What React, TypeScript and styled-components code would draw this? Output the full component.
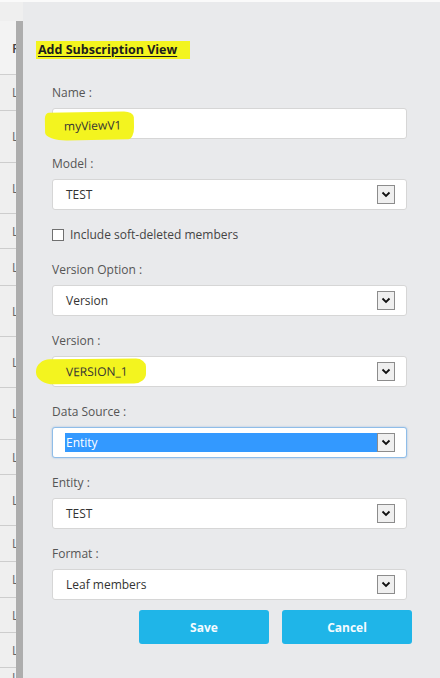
import styled, { createGlobalStyle } from 'styled-components';

type Option = { label: string; value: string; mark?: boolean; selected?: boolean; focused?: boolean };

const rowHeights = [36, 52, 51, 35, 37, 51, 51, 52, 35, 51, 36, 36, 35, 35, 20];

const selects: Option[] = [
    { label: 'Version Option', value: 'Version' },
    { label: 'Version', value: 'VERSION_1', mark: true },
    { label: 'Data Source', value: 'Entity', selected: true, focused: true },
    { label: 'Entity', value: 'TEST' },
    { label: 'Format', value: 'Leaf members' },
];

const Chevron = () => (
    <svg width="10" height="7" viewBox="0 0 10 7">
        <path d="M1.5 1.5 L5 5 L8.5 1.5" fill="none" stroke="#111" strokeWidth="1.8" />
    </svg>
);

const App = () => {
    return (
        <Screen>
            <GlobalStyle />
            <TopLine />
            <Body>
                <Strip>
                    <StripTop />
                    <StripMain>
                        <Table>
                            <HeaderCell>Format</HeaderCell>
                            {rowHeights.map((h, i) => (
                                <Cell key={i} $h={h}>Leaf members</Cell>
                            ))}
                        </Table>
                        <Splitter />
                    </StripMain>
                </Strip>
                <Panel>
                    <Title>
                        <TitleMark>Add Subscription View</TitleMark>
                    </Title>
                    <Form>
                        <Field>
                            <Label>Name :</Label>
                            <TextBox>
                                <NameMark>myViewV1</NameMark>
                            </TextBox>
                        </Field>
                        <Field>
                            <Label>Model :</Label>
                            <SelectBox>
                                <Value>TEST</Value>
                                <ArrowBox><Chevron /></ArrowBox>
                            </SelectBox>
                        </Field>
                        <CheckRow>
                            <CheckBox />
                            <span>Include soft-deleted members</span>
                        </CheckRow>
                        {selects.map((s) => (
                            <Field key={s.label}>
                                <Label>{s.label} :</Label>
                                <SelectBox $focused={s.focused}>
                                    <Value $selected={s.selected}>
                                        {s.mark ? <VersionMark>{s.value}</VersionMark> : s.value}
                                    </Value>
                                    <ArrowBox><Chevron /></ArrowBox>
                                </SelectBox>
                            </Field>
                        ))}
                        <Actions>
                            <Button>Save</Button>
                            <Button>Cancel</Button>
                        </Actions>
                    </Form>
                </Panel>
            </Body>
        </Screen>
    )
}

const GlobalStyle = createGlobalStyle`
    html, body {
        margin: 0;
        padding: 0;
    }
    body {
        background: #e9eaec;
        font-family: "Segoe UI", "Open Sans", "Noto Sans", sans-serif;
    }
`

const Screen = styled.div`
    width: 440px;
    height: 678px;
    display: flex;
    flex-direction: column;
    overflow: hidden;
    background: #e9eaec;
`

const TopLine = styled.div`
    height: 2px;
    background: #fafafa;
    flex-shrink: 0;
`

const Body = styled.div`
    flex: 1;
    display: flex;
    min-height: 0;
`

const Strip = styled.div`
    width: 23px;
    flex-shrink: 0;
    display: flex;
    flex-direction: column;
`

const StripTop = styled.div`
    height: 19px;
    background: #efefef;
`

const StripMain = styled.div`
    flex: 1;
    display: flex;
    min-height: 0;
`

const Table = styled.div`
    width: 16px;
    overflow: hidden;
    display: flex;
    flex-direction: column;
    background: #efefef;
`

const HeaderCell = styled.div`
    height: 54px;
    flex-shrink: 0;
    box-sizing: border-box;
    padding-left: 12px;
    display: flex;
    align-items: center;
    white-space: nowrap;
    font-size: 13px;
    font-weight: 600;
    color: #444;
    background: #f3f3f3;
    border-bottom: 1px solid #cfcfcf;
`

const Cell = styled.div<{ $h: number }>`
    height: ${p => p.$h}px;
    flex-shrink: 0;
    box-sizing: border-box;
    padding-left: 12px;
    display: flex;
    align-items: center;
    white-space: nowrap;
    font-size: 12px;
    color: #666;
    border-bottom: 1px solid #cdcdcd;
`

const Splitter = styled.div`
    width: 7px;
    background: #adadad;
`

const Panel = styled.div`
    flex: 1;
    padding: 39px 33px 0 15px;
`

const Title = styled.h2`
    margin: 0;
    font-size: 12.5px;
    line-height: 16px;
    font-weight: 700;
    color: #1c1c1c;
`

const TitleMark = styled.span`
    display: inline-block;
    margin-left: -2px;
    padding: 1px 13px 1px 2px;
    background: #f3f41f;
    text-decoration: underline;
    text-underline-offset: 2px;
`

const Form = styled.div`
    margin: 24px 0 0 14px;
    display: flex;
    flex-direction: column;
`

const Field = styled.div`
    display: flex;
    flex-direction: column;
    & + & {
        margin-top: 15px;
    }
`

const Label = styled.label`
    padding-top: 2px;
    font-size: 12px;
    line-height: 16px;
    color: #555;
    margin-bottom: 7px;
`

const TextBox = styled.div`
    height: 31px;
    box-sizing: border-box;
    display: flex;
    align-items: center;
    padding-left: 11px;
    background: #fff;
    border: 1px solid #d6d6d6;
    border-radius: 3px;
    font-size: 12px;
    color: #333;
`

const NameMark = styled.span`
    display: inline-block;
    margin: 5px 0 0 -19px;
    padding: 4px 13px 5px 19px;
    background: #f3f41f;
    border-radius: 4px 10px 6px 22px / 6px 6px 12px 8px;
    transform: rotate(-1deg);
    line-height: 19px;
`

const SelectBox = styled.div<{ $focused?: boolean }>`
    height: 31px;
    box-sizing: border-box;
    display: flex;
    align-items: center;
    padding: 0 11px 0 12px;
    background: #fff;
    border: 1px solid ${p => (p.$focused ? '#8fbde8' : '#d6d6d6')};
    box-shadow: ${p => (p.$focused ? '0 0 2px rgba(80, 150, 220, 0.5)' : 'none')};
    border-radius: 3px;
    font-size: 12px;
    color: #333;
`

const Value = styled.div<{ $selected?: boolean }>`
    flex: 1;
    height: 19px;
    line-height: 19px;
    padding-left: 1px;
    white-space: nowrap;
    background: ${p => (p.$selected ? '#3399ff' : 'transparent')};
    color: ${p => (p.$selected ? '#fff' : '#333')};
`

const VersionMark = styled.span`
    display: inline-block;
    margin: -5px 0 0 -30px;
    padding: 3px 18px 3px 30px;
    background: #f3f41f;
    border-radius: 14px 10px 12px 18px / 12px 8px 10px 12px;
    transform: rotate(-0.5deg);
    line-height: 19px;
`

const ArrowBox = styled.div`
    width: 18px;
    height: 19px;
    box-sizing: border-box;
    flex-shrink: 0;
    display: flex;
    align-items: center;
    justify-content: center;
    background: #efefef;
    border: 1px solid #8c8c8c;
`

const CheckRow = styled.div`
    margin: 17px 0 17px;
    display: flex;
    align-items: center;
    gap: 6px;
    font-size: 12px;
    line-height: 16px;
    color: #444;
`

const CheckBox = styled.span`
    width: 12px;
    height: 12px;
    box-sizing: border-box;
    border: 1px solid #707070;
    background: #fff;
`

const Actions = styled.div`
    margin: 10px -5px 0 0;
    display: flex;
    justify-content: flex-end;
    gap: 13px;
`

const Button = styled.button`
    width: 130px;
    height: 34px;
    border: none;
    border-radius: 3px;
    background: #1fb5e8;
    color: #f4fbff;
    font-family: inherit;
    font-size: 12px;
    font-weight: 700;
    cursor: pointer;
`

export default App
